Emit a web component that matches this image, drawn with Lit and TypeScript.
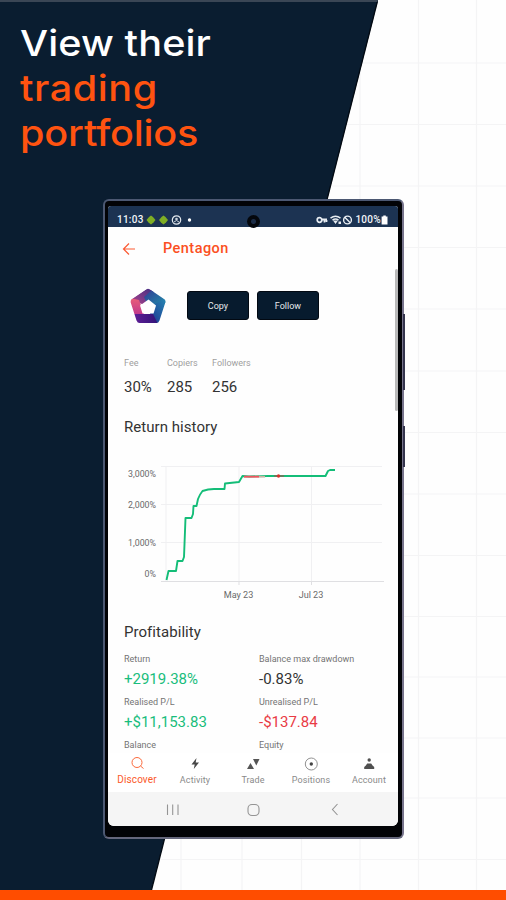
import { LitElement, html, css, svg } from "lit";
import { customElement } from "lit/decorators.js";
import { classMap } from "lit/directives/class-map.js";

const gridX = [181, 242, 301.5, 360, 418.5, 476.5];
const gridY = [63, 124.5, 186, 247.5, 309, 371, 432.5, 494, 555.5, 616.5, 677, 738, 798, 859.5];

@customElement("promo-backdrop")
class PromoBackdrop extends LitElement {
  static styles = css`
    :host { display: block; height: 900px; }
    svg { display: block; }
  `;
  render() {
    return html`<svg width="506" height="900" viewBox="0 0 506 900">
      <rect width="506" height="900" fill="#fefefe" />
      <g stroke="#f4f4f5" stroke-width="1.2">
        ${gridX.map((x) => svg`<path d="M${x} 0V890" />`)}
        ${gridY.map((y) => svg`<path d="M150 ${y}H506" />`)}
      </g>
      <path d="M0 0H378L151.500 890H0Z" fill="#0a1d30" />
      <path d="M377.500 1L151.500 890" stroke="#030a12" stroke-width="1.300" />
      <path d="M0 1H377.500" stroke="#3a4655" stroke-width="2" />
      <rect y="890" width="506" height="10" fill="#ff4d00" />
    </svg>`;
  }
}

@customElement("status-bar")
class StatusBar extends LitElement {
  static styles = css`
    :host {
      display: flex; align-items: center; height: 21px; padding: 6px 10px 0 9px;
      box-sizing: border-box; background: #1c3352; color: #f2f5f8;
      font: 500 10px/12px Roboto, sans-serif; justify-content: space-between;
    }
    .side { display: flex; align-items: center; }
    .time { letter-spacing: 0.25px; width: 28px; }
    .pct { letter-spacing: 0.3px; }
    svg { display: block; }
  `;
  render() {
    return html`
      <div class="side">
        <span class="time">11:03</span>
        <svg width="50" height="12" viewBox="0 0 50 12">
          <path d="M1.500 6L4 3L6 1.500L8 3L10.500 6L8.500 8.500L6 10.500L3.500 8.500Z" fill="#7fae24" />
          <path d="M14 6L16.500 3L18.500 1.500L20.500 3L23 6L21 8.500L18.500 10.500L16 8.500Z" fill="#7fae24" />
          <circle cx="31.500" cy="6" r="4.200" fill="none" stroke="#e1e6ec" stroke-width="1.200" />
          <circle cx="31.500" cy="5" r="1.300" fill="#c9d1da" />
          <path d="M29 8L31.500 6.500L34 8" fill="none" stroke="#c9d1da" />
          <circle cx="44.500" cy="6" r="1.700" fill="#fff" />
        </svg>
      </div>
      <div class="side">
        <svg width="40" height="12" viewBox="0 0 40 12">
          <g fill="none" stroke="#e8edf2">
            <circle cx="4.500" cy="6" r="2.300" stroke-width="1.700" />
            <path d="M6.800 5.500H12M9.500 6v2.500M11.500 6v2" stroke-width="1.800" />
            <circle cx="32.500" cy="6" r="3.900" stroke-width="1.400" />
            <path d="M29.800 3.300L35.200 8.700" stroke-width="1.400" />
            <path d="M15.500 4.200Q20.500 0.500 25.500 4.200M17.500 6.200Q20.500 4 23.500 6.200" stroke-width="1.500" />
          </g>
          <path d="M18 6.500H23L20.500 10ZM23.500 7.500h2.500v2.500h-2.500Z" fill="#e8edf2" />
        </svg>
        <span class="pct">100%</span>
        <svg width="7" height="12" viewBox="0 0 7 12">
          <path d="M2.300 1.500H4.800V2.500H6.500V10.500H0.600V2.500H2.300Z" fill="#fff" />
        </svg>
      </div>`;
  }
}

@customElement("return-chart")
class ReturnChart extends LitElement {
  static styles = css`
    :host { display: block; height: 170px; }
    svg { display: block; }
    .tick { font: 8.8px Roboto, sans-serif; fill: #6a6a6a; }
    .end { text-anchor: end; }
    .mid { text-anchor: middle; font-size: 9.1px; }
  `;
  render() {
    const yTicks: [string, number][] = [["3,000%", 40], ["2,000%", 71], ["1,000%", 108.5], ["0%", 140]];
    return html`<svg width="290" height="170" viewBox="0 0 290 170">
      <g stroke="#f0f0f2" fill="none">
        <path d="M53 29.500H274M53 67.500H274M53 105.500H274M131 30V144M203.500 30V144M58 30V144" />
        <path d="M53 144.500H276M131 144V148M203.500 144V148" stroke="#dfdfe2" />
      </g>
      ${yTicks.map(([t, y]) => svg`<text class="tick end" x="48" y=${y}>${t}</text>`)}
      <text class="tick mid" x="130.500" y="161">May 23</text>
      <text class="tick mid" x="203" y="161">Jul 23</text>
      <path
        d="M58.500 143L60.500 134H68L69.500 124H74.500L76 120L77.500 81H83.500L85 77L85.500 69H88.500L90 62Q92 57 94.500 54Q100 52 106 52H116.500L117 46.500L131 45L134.500 39L141 39.500L160 39H217.500L220 34L222 33H227"
        fill="none" stroke="#14bd78" stroke-width="1.900" stroke-linejoin="round" />
      <path d="M136 39.700H151" stroke="#f0555f" stroke-width="1.900" />
      <path d="M151 39.700H157" stroke="#c9b5a2" stroke-width="1.600" />
      <path d="M166 39H176" stroke="#806b58" stroke-width="1.500" />
      <circle cx="170.500" cy="39" r="1.700" fill="#d5332c" />
    </svg>`;
  }
}

const icons = {
  discover: svg`<g fill="none" stroke="#fb6a3c" stroke-width="1"><circle cx="9" cy="7.500" r="5" /><path d="M12.600 11.100L15.500 13.500" /></g>`,
  activity: svg`<path d="M10.500 3L5.500 9.500H8.700L7.800 14L13 7.500H9.700Z" fill="#474747" />`,
  trade: svg`<path d="M3 14L6.500 8L10 14ZM9 4H15.500L12.300 10.500Z" fill="#555" />`,
  positions: svg`<circle cx="9.300" cy="9" r="6" fill="none" stroke="#858585" stroke-width="0.900" /><circle cx="9.300" cy="9" r="1.700" fill="#444" />`,
  account: svg`<circle cx="9.200" cy="5" r="1.700" fill="#505050" /><path d="M4.200 14V12Q6 10.500 7.200 8.500H11.200Q12.400 10.500 14.200 12V14Z" fill="#505050" />`,
};

@customElement("tab-bar")
class TabBar extends LitElement {
  static styles = css`
    :host {
      display: grid; grid-template-columns: repeat(5, 58px); height: 39px; flex: none;
      background: #fff; font: 9px/12px Roboto, sans-serif; color: #8a8a8a;
    }
    .tab { display: flex; flex-direction: column; align-items: center; padding-top: 2px; gap: 1px; }
    .name { letter-spacing: 0.1px; }
    .active { color: #fb5a2a; font-size: 10px; }
    svg { display: block; height: 18px; width: 18px; }
  `;
  render() {
    const tabs = [
      ["Discover", icons.discover], ["Activity", icons.activity], ["Trade", icons.trade],
      ["Positions", icons.positions], ["Account", icons.account],
    ] as const;
    return html`${tabs.map(([name, icon], i) => html`
      <div class=${classMap({ tab: true, active: i === 0 })}>
        <svg viewBox="0 0 18 18">${icon}</svg>
        <span class="name">${name}</span>
      </div>`)}`;
  }
}

@customElement("trader-screen")
class TraderScreen extends LitElement {
  static styles = css`
    :host {
      display: flex; flex-direction: column; width: 290px; height: 620px; position: relative;
      background: #fefefe; border-radius: 3px 3px 6px 6px; overflow: hidden;
      font-family: Roboto, sans-serif; color: #333;
    }
    .camera {
      position: absolute; left: 139px; top: 9px; width: 13px; height: 13px;
      border-radius: 50%; background: radial-gradient(circle, #1b2c47 0 2px, #04070c 3px);
    }
    .scroll { position: absolute; right: 0.5px; top: 63px; width: 3px; height: 142px; border-radius: 2px; background: #b9b9b9; }
    .top { display: flex; align-items: center; height: 44px; flex: none; padding-left: 14px; gap: 27px; }
    .title { font-size: 14.5px; font-weight: 500; letter-spacing: 0.45px; color: #fb4f22; line-height: 20px; }
    .profile { display: flex; align-items: center; height: 69px; flex: none; padding-left: 22px; }
    .buttons { display: flex; gap: 8px; margin-left: 21px; }
    .button {
      width: 62px; height: 29px; box-sizing: border-box; border-radius: 3px; background: #071b2e;
      border: 1px solid #020912; color: #e6e9ed; font-size: 9px; line-height: 28px; text-align: center;
    }
    .stats { display: grid; grid-template-columns: 43px 45px auto; padding: 16px 0 0 16px; flex: none; }
    .label { font-size: 9px; line-height: 14px; color: #747474; white-space: nowrap; }
    .stats .label { color: #9f9f9f; font-size: 9px; }
    .value { font-size: 15px; line-height: 20px; margin-top: 3px; }
    .stats .value { margin-top: 7px; }
    .heading { font-size: 15px; line-height: 20px; padding-left: 16px; flex: none; letter-spacing: 0.05px; }
    .history { margin-top: 20px; }
    .profit { margin-top: 15px; }
    .body { flex: 1; min-height: 0; overflow: hidden; display: flex; flex-direction: column; }
    .metrics { display: grid; grid-template-columns: 135px auto; row-gap: 6px; padding: 10px 0 0 16px; }
    .up { color: #19bd7c; }
    .down { color: #e93b45; }
    .keys { display: flex; height: 34px; flex: none; background: #f5f5f5; }
    svg { display: block; }
  `;
  render() {
    const metrics = [
      ["Return", "+2919.38%", "up"], ["Balance max drawdown", "-0.83%", ""],
      ["Realised P/L", "+$11,153.83", "up"], ["Unrealised P/L", "-$137.84", "down"],
      ["Balance", "", ""], ["Equity", "", ""],
    ];
    return html`
      <status-bar></status-bar>
      <div class="top">
        <svg width="14" height="14" viewBox="0 0 14 14" fill="none" stroke="#fb5a33" stroke-width="1.200">
          <path d="M13 7H1.800M7 1.500L1.500 7L7 12.500" />
        </svg>
        <div class="title">Pentagon</div>
      </div>
      <div class="body">
        <div class="profile">
          <svg width="36" height="36" viewBox="0 0 36 36">
            <defs>
              <clipPath id="outline"><path d="M16 1.500Q18 0 20 1.500L34 11Q36 12.500 35.300 14.500L29.500 32.500Q28.500 35 26.500 35H9.500Q7.500 35 6.500 32.500L0.700 14.500Q0 12.500 2 11Z" /></clipPath>
              <linearGradient id="a" x1="0" y1="1" x2="1" y2="0"><stop stop-color="#b8468c" /><stop offset="1" stop-color="#3d2d83" /></linearGradient>
              <linearGradient id="b" x1="0" y1="0" x2="1" y2="1"><stop stop-color="#343693" /><stop offset="1" stop-color="#1f91ab" /></linearGradient>
              <linearGradient id="c" x1="1" y1="0" x2="0" y2="1"><stop stop-color="#2789b3" /><stop offset="1" stop-color="#1b2c8f" /></linearGradient>
              <linearGradient id="d"><stop stop-color="#67209b" /><stop offset="1" stop-color="#311478" /></linearGradient>
              <linearGradient id="e" x1="0" y1="0" x2="0" y2="1"><stop stop-color="#ea5f77" /><stop offset="1" stop-color="#c23a8c" /></linearGradient>
            </defs>
            <g clip-path="url(#outline)">
              <path d="M0 12L18 0L24 3L18 18Z" fill="url(#a)" />
              <path d="M14 9L24 0L36 10V16L18 18Z" fill="url(#b)" />
              <path d="M25 16L36 10V36H23L18 18Z" fill="url(#c)" />
              <path d="M0 26H23L28 36H0Z" fill="url(#d)" />
              <path d="M0 10L9 12L14 26H3L0 20Z" fill="url(#e)" />
            </g>
            <path d="M18.500 11.500L26 17.500L23.500 25.500H12.500L10 17.500Z" fill="#fff" />
          </svg>
          <div class="buttons"><div class="button">Copy</div><div class="button">Follow</div></div>
        </div>
        <div class="stats">
          ${[["Fee", "30%"], ["Copiers", "285"], ["Followers", "256"]].map(([l, v]) => html`
            <div><div class="label">${l}</div><div class="value">${v}</div></div>`)}
        </div>
        <div class="heading history">Return history</div>
        <return-chart></return-chart>
        <div class="heading profit">Profitability</div>
        <div class="metrics">
          ${metrics.map(([l, v, tone]) => html`
            <div><div class="label">${l}</div><div class=${classMap({ value: true, up: tone === "up", down: tone === "down" })}>${v}</div></div>`)}
        </div>
      </div>
      <tab-bar></tab-bar>
      <div class="keys">
        <svg width="290" height="34" viewBox="0 0 290 34" fill="none" stroke="#949494" stroke-width="1.100">
          <path d="M59.500 12.500V23M64.700 12.500V23M70 12.500V23" />
          <rect x="140" y="12.500" width="11" height="11" rx="4" />
          <path d="M229.500 12L224.500 17.500L229.500 23" />
        </svg>
      </div>
      <div class="camera"></div>
      <div class="scroll"></div>`;
  }
}

@customElement("app-root")
class AppRoot extends LitElement {
  static styles = css`
    :host { display: grid; width: 506px; height: 900px; overflow: hidden; }
    promo-backdrop, .content { grid-area: 1 / 1; }
    .content { display: flex; flex-direction: column; z-index: 1; }
    .headline {
      margin: 0; padding: 21px 0 0 20px; height: 178px; font: 450 36px/45px Inter, sans-serif;
      color: #ff5310; letter-spacing: 0.1px;
    }
    .line { display: block; width: max-content; transform: scaleX(1.1); transform-origin: 0 0; }
    .trading { letter-spacing: 0.5px; }
    .portfolios { letter-spacing: -0.15px; }
    .white { color: #fff; }
    .device { display: flex; margin-left: 103px; }
    .phone {
      width: 301px; height: 640px; box-sizing: border-box; background: #020306;
      border: 2px solid #4c5872; border-right-color: #77748c; border-bottom-color: #65677c;
      border-radius: 6px; padding: 5px 4px 0 3px;
    }
    .side-keys { display: flex; flex-direction: column; gap: 36px; padding-top: 115px; margin-left: -1px; }
    .key { width: 2px; height: 76px; background: #34344c; }
    .short { height: 41px; }
  `;
  render() {
    return html`
      <promo-backdrop></promo-backdrop>
      <div class="content">
        <h1 class="headline">
          <span class="line white">View their</span>
          <span class="line trading">trading</span>
          <span class="line portfolios">portfolios</span>
        </h1>
        <div class="device">
          <div class="phone"><trader-screen></trader-screen></div>
          <div class="side-keys"><div class="key"></div><div class="key short"></div></div>
        </div>
      </div>`;
  }
}
